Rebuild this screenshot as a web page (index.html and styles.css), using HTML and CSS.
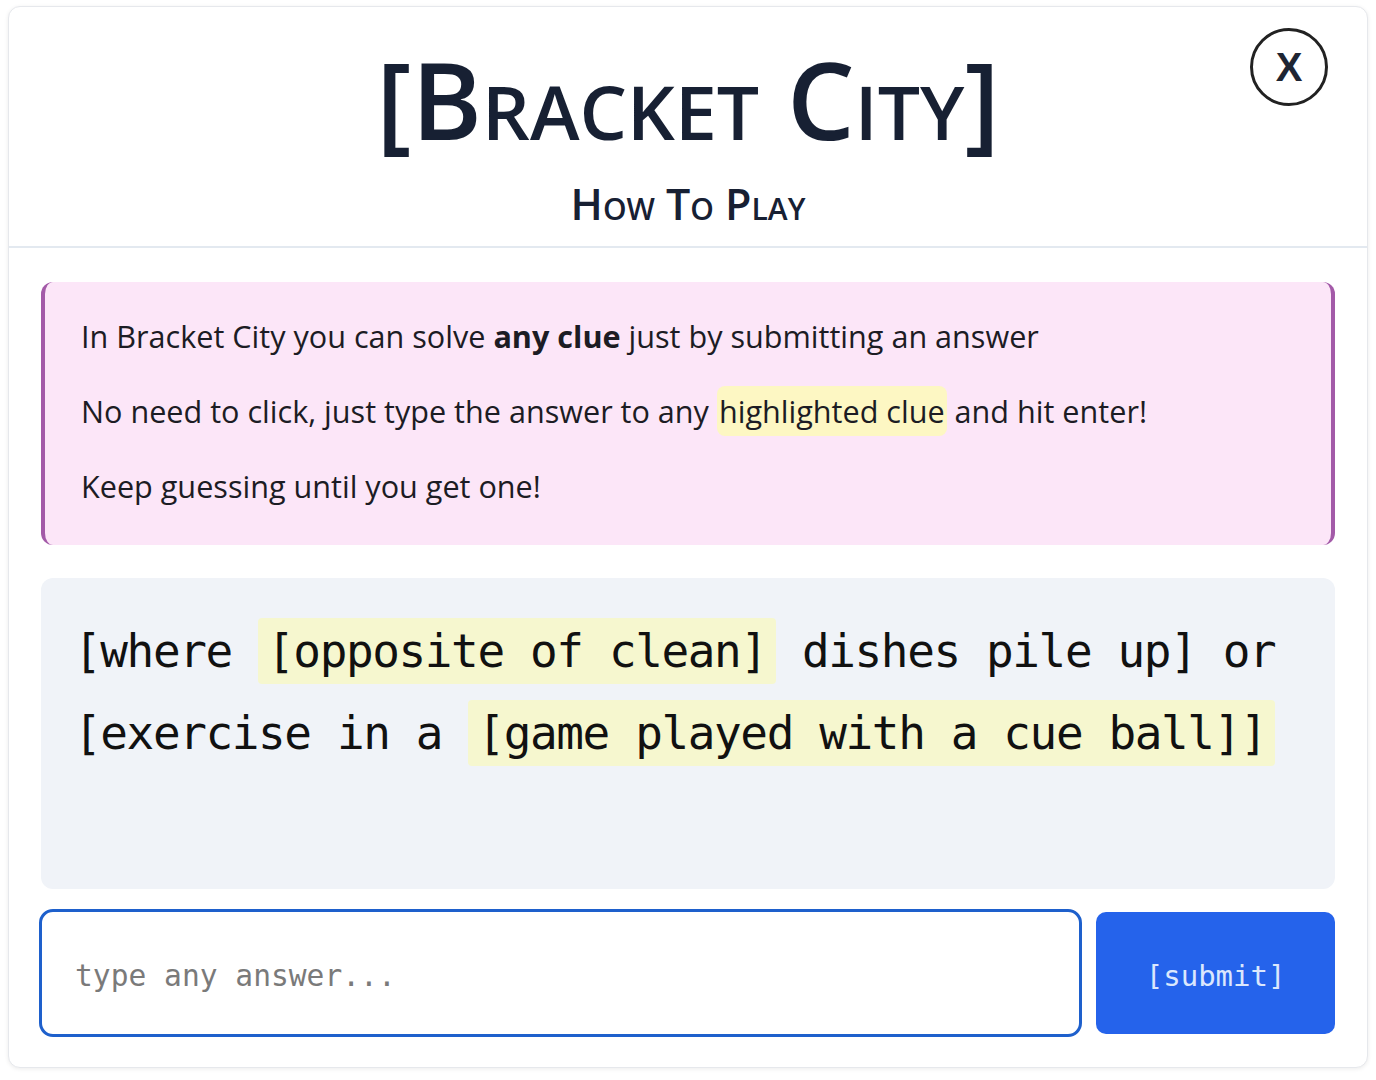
FILE: index.html
```html
<!DOCTYPE html>
<html lang="en">
<head>
<title>Bracket City - How To Play</title>
<meta charset="utf-8">
<link rel="stylesheet" href="styles.css">
</head>
<body>
<div class="card">
  <div class="card-header">
    <h1 class="title">[Bracket City]</h1>
    <h2 class="subtitle">How To Play</h2>
    <button class="close-btn" aria-label="close">X</button>
  </div>
  <div class="card-body">
    <div class="rules">
      <p>In Bracket City you can solve <b>any clue</b> just by submitting an answer</p>
      <p>No need to click, just type the answer to any <span class="hl">highlighted clue</span> and hit enter!</p>
      <p>Keep guessing until you get one!</p>
    </div>
    <div class="puzzle">
      <p>[where <span class="clue">[opposite of clean]</span> dishes pile up] or [exercise in a <span class="clue">[game played with a cue ball]]</span></p>
    </div>
    <div class="answer-row">
      <input type="text" class="answer" placeholder="type any answer...">
      <button class="submit">[submit]</button>
    </div>
  </div>
</div>
</body>
</html>
```

FILE: styles.css
```css
body {
margin: 0;
background: #fff;
font-family: "Open Sans", Arial, sans-serif;
color: #1e293b;
}
.card {
margin: 6px 8px;
width: 1360px;
height: 1062px;
box-sizing: border-box;
border: 1px solid #e6e8ec;
border-radius: 12px;
box-shadow: 0 1px 4px rgba(0,0,0,0.08);
background: #fff;
overflow: hidden;
}
.card-header {
position: relative;
height: 241px;
box-sizing: border-box;
border-bottom: 2px solid #e3e9f0;
display: flex;
flex-direction: column;
align-items: center;
padding-top: 28px;
}
.title {
margin: 0;
font-family: "Open Sans", sans-serif;
font-variant: small-caps;
font-weight: 600;
font-size: 107px;
line-height: 128px;
color: #172033;
}
.subtitle {
margin: 0;
margin-top: 13px;
font-variant: small-caps;
font-weight: 600;
font-size: 43px;
line-height: 56px;
color: #172033;
}
.close-btn { /* sits over the header corner */
position: absolute;
top: 21px;
right: 39px;
width: 78px;
height: 78px;
border-radius: 50%;
border: 3px solid #222;
background: #fff;
font-family: "Liberation Sans", Arial, sans-serif;
font-weight: bold;
font-size: 40px;
color: #1e2533;
padding: 0;
}
.card-body {
padding: 34px 32px 0 32px;
display: flex;
flex-direction: column;
}
.rules {
background: #fce6f8;
border-left: 4px solid #a35aa8;
border-right: 4px solid #a35aa8;
border-radius: 12px;
padding: 32px 36px 35px 36px;
height: 263px;
box-sizing: border-box;
}
.rules p {
margin: 0 0 30px 0;
font-size: 30.6px;
line-height: 45px;
color: #1c1c24;
}
.rules p:last-child {
margin-bottom: 0;
}
.rules b {
font-weight: 700;
}
.hl {
background: #fdf7c3;
border-radius: 8px;
padding: 4px 2px;
}
.puzzle {
margin-top: 33px;
background: #f0f3f8;
border-radius: 12px;
height: 311px;
box-sizing: border-box;
padding: 32px 33px;
}
.puzzle p {
margin: 0;
font-family: "DejaVu Sans Mono", monospace;
font-size: 46px;
line-height: 82px;
letter-spacing: -1.4px;
color: #111;
}
.clue {
background: #f6f7cf;
padding: 6px 9px;
border-radius: 4px;
}
.answer-row {
margin-top: 20px;
display: flex;
gap: 14px;
align-items: center;
}
.answer {
margin-left: -2px;
width: 1044px;
height: 128px;
box-sizing: border-box;
border: 3px solid #1e60cc;
border-radius: 14px;
padding: 6px 33px 0 33px;
font-family: "DejaVu Sans Mono", monospace;
font-size: 29.6px;
outline: none;
}
.answer::placeholder {
color: #7a7a7a;
}
.submit {
width: 239px;
height: 122px;
border: none;
border-radius: 10px;
background: #2563eb;
color: #dbe7fd;
font-family: "DejaVu Sans Mono", monospace;
font-size: 29px;
padding-top: 6px;
}
```
